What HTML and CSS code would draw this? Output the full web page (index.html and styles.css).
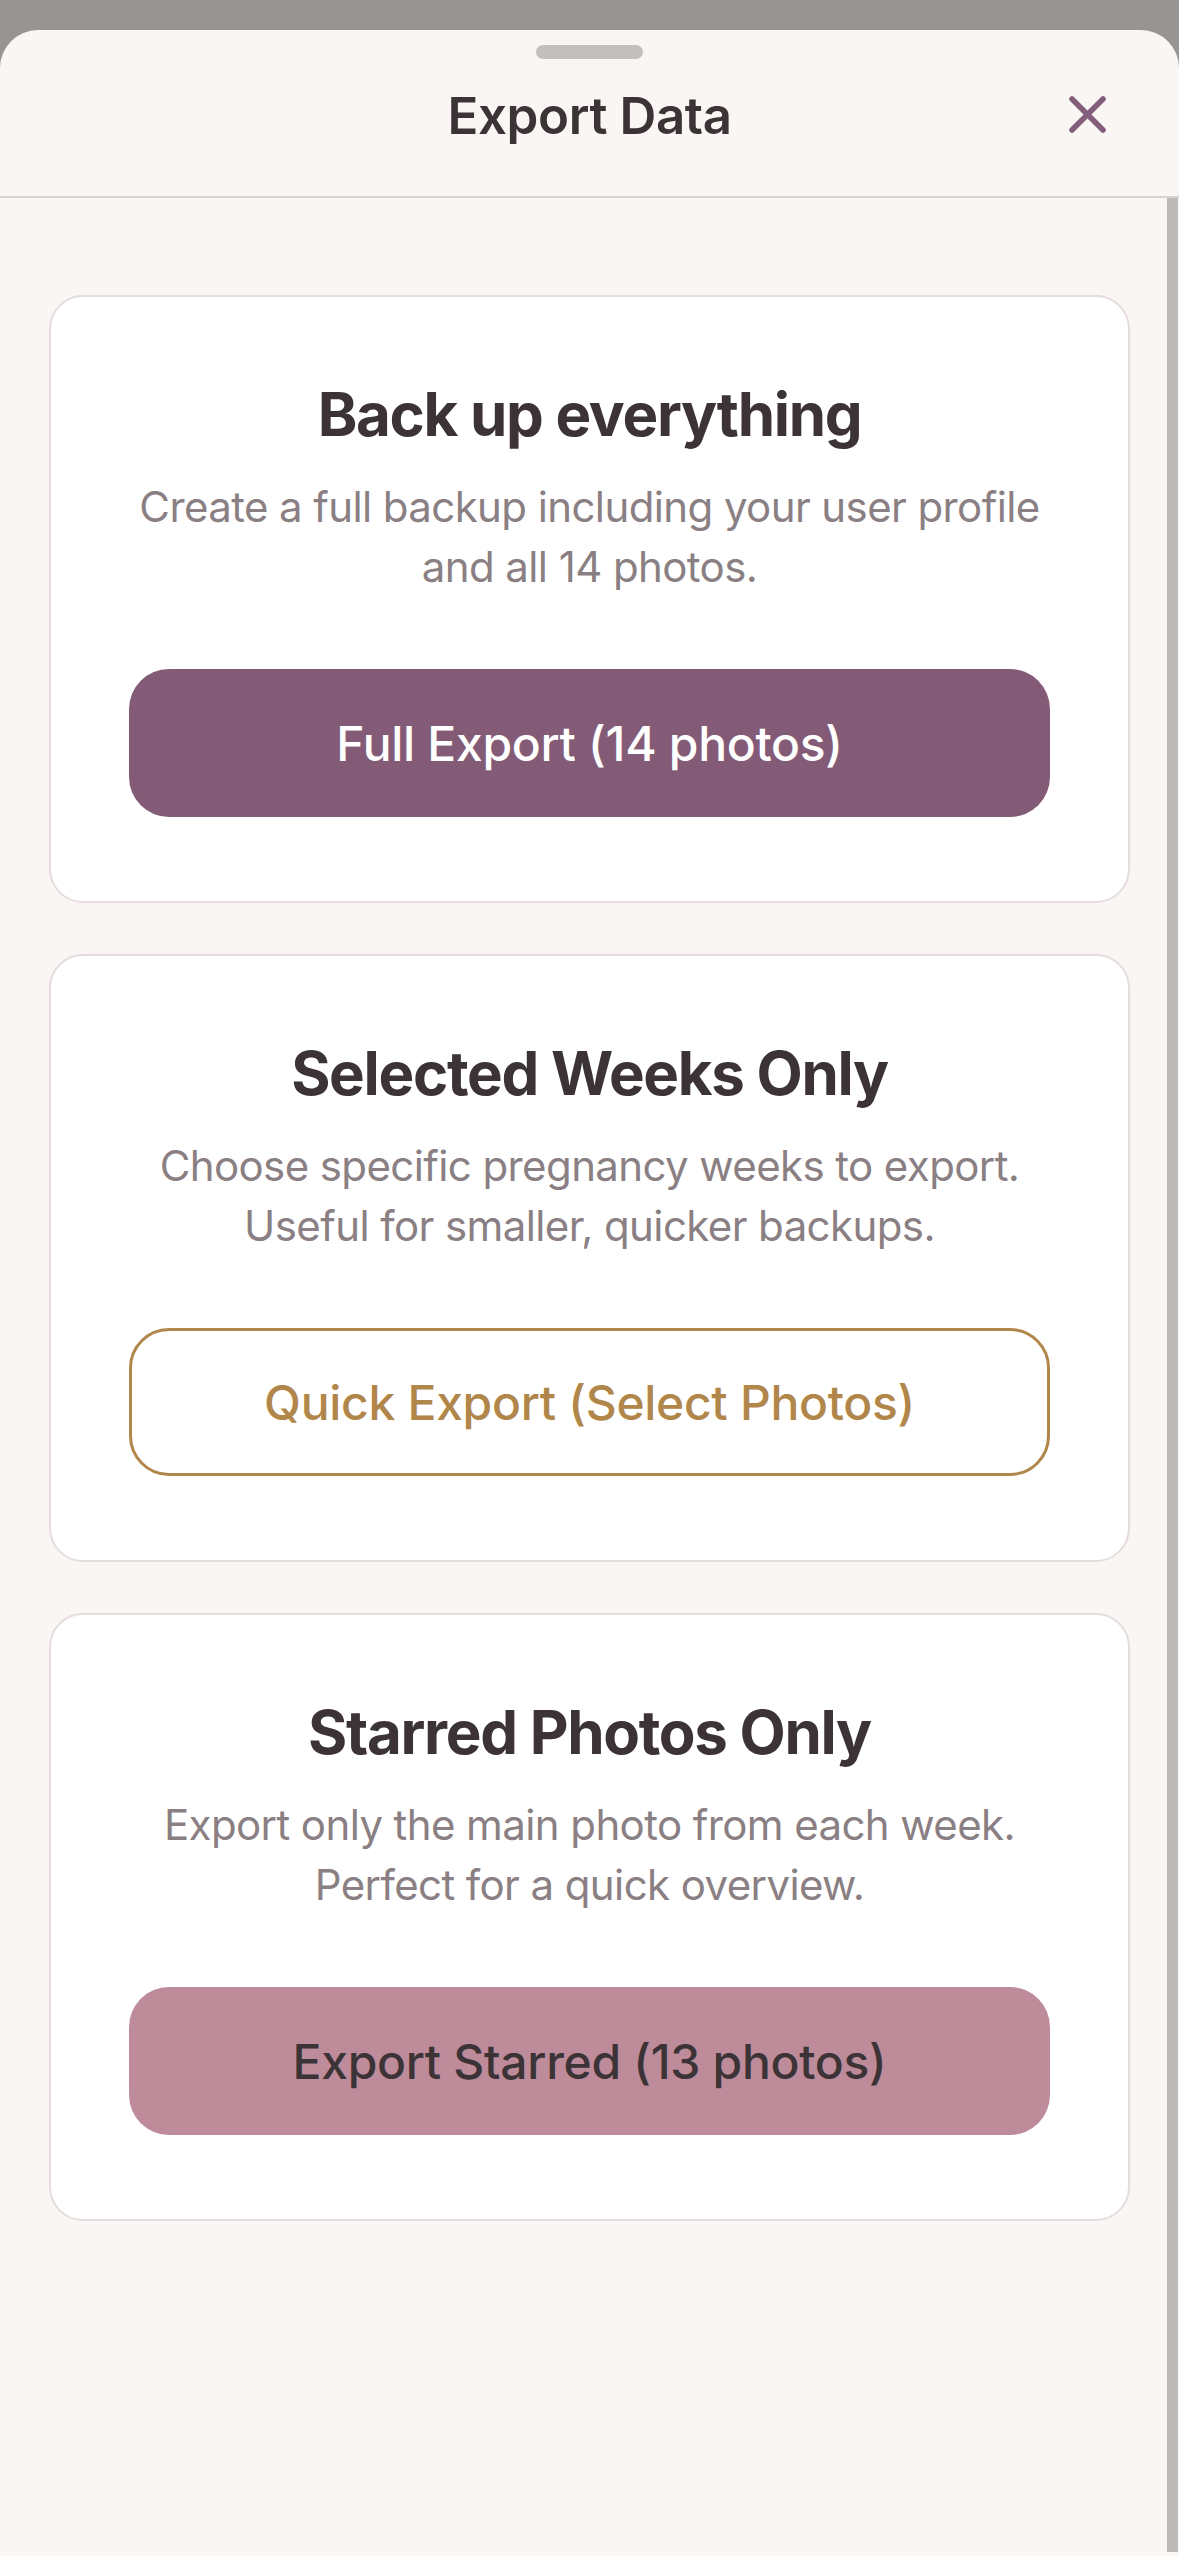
FILE: index.html
```html
<!DOCTYPE html>
<html lang="en">
<head>
<meta charset="utf-8">
<title>Export Data</title>
<link rel="stylesheet" href="styles.css">
</head>
<body>
<div class="sheet">
  <header class="sheet-header">
    <div class="handle"></div>
    <div class="title-row">
      <span class="spacer"></span>
      <h1 class="sheet-title">Export Data</h1>
      <button class="close" aria-label="Close">
        <svg width="37" height="37" viewBox="0 0 37 37"><path d="M3 3 L34 34 M34 3 L3 34" stroke="#835d7c" stroke-width="5.5" stroke-linecap="round" fill="none"/></svg>
      </button>
    </div>
  </header>
  <main class="content">
    <section class="card">
      <h2 class="card-title">Back up everything</h2>
      <p class="card-desc">Create a full backup including your user profile<br>and all 14 photos.</p>
      <button class="btn btn-primary">Full Export (14 photos)</button>
    </section>
    <section class="card">
      <h2 class="card-title">Selected Weeks Only</h2>
      <p class="card-desc">Choose specific pregnancy weeks to export.<br>Useful for smaller, quicker backups.</p>
      <button class="btn btn-outline">Quick Export (Select Photos)</button>
    </section>
    <section class="card">
      <h2 class="card-title">Starred Photos Only</h2>
      <p class="card-desc">Export only the main photo from each week.<br>Perfect for a quick overview.</p>
      <button class="btn btn-soft">Export Starred (13 photos)</button>
    </section>
  </main>
  <div class="scrollbar"></div>
</div>
</body>
</html>
```
FILE: styles.css
```css
* { box-sizing: border-box; }
html, body { margin: 0; padding: 0; }
body {
  background: #989493;
  font-family: Inter, "Noto Sans", "Liberation Sans", sans-serif;
  width: 1179px;
  height: 2556px;
  overflow: hidden;
}
.sheet {
  position: relative;
  margin-top: 30px;
  background: #faf6f3;
  border-radius: 38px 38px 0 0;
  height: 2526px;
}
.sheet-header {
  display: flex;
  flex-direction: column;
  align-items: center;
  padding-top: 15px;
  padding-bottom: 49px;
  border-bottom: 2px solid #d8d3d0;
}
.handle {
  width: 107px;
  height: 14px;
  border-radius: 7px;
  background: #c1c0be;
}
.title-row {
  width: 100%;
  margin-top: 26px;
  display: grid;
  grid-template-columns: 1fr auto 1fr;
  align-items: center;
}
.sheet-title {
  margin: 0;
  font-size: 51px;
  line-height: 62px;
  font-weight: 600;
  color: #3b3336;
  letter-spacing: -0.4px;
}
.close {
  justify-self: end;
  margin-right: 73px;
  margin-top: -3px;
  padding: 0;
  border: 0;
  background: none;
  width: 37px;
  height: 37px;
  display: flex;
}
.content {
  padding: 97px 49px 0;
  display: flex;
  flex-direction: column;
  gap: 51px;
}
.card {
  background: #ffffff;
  border: 2px solid #e4dcdf;
  border-radius: 34px;
  padding: 81px 78px 84px;
  display: flex;
  flex-direction: column;
  align-items: stretch;
  text-align: center;
}
.card-title {
  margin: 0;
  font-size: 60px;
  line-height: 72px;
  font-weight: 700;
  color: #3b3336;
  letter-spacing: -1.3px;
}
.card-desc {
  margin: 27px 0 0;
  font-size: 42px;
  line-height: 60px;
  font-weight: 400;
  color: #8a7f83;
  letter-spacing: -0.6px;
}
.btn {
  margin-top: 72px;
  height: 148px;
  border-radius: 40px;
  font-family: inherit;
  font-size: 48px;
  font-weight: 500;
  letter-spacing: -0.3px;
  border: 0;
  display: flex;
  align-items: center;
  justify-content: center;
}
.btn-primary {
  background: #845b77;
  color: #ffffff;
}
.btn-outline {
  background: #ffffff;
  border: 3px solid #b1864a;
  color: #b1864a;
}
.btn-soft {
  background: #be8b9b;
  color: #3b3336;
}
.scrollbar {
  position: absolute;
  top: 168px;
  right: 1px;
  width: 11px;
  height: 2354px;
  background: #bdbbb8;
}
```
